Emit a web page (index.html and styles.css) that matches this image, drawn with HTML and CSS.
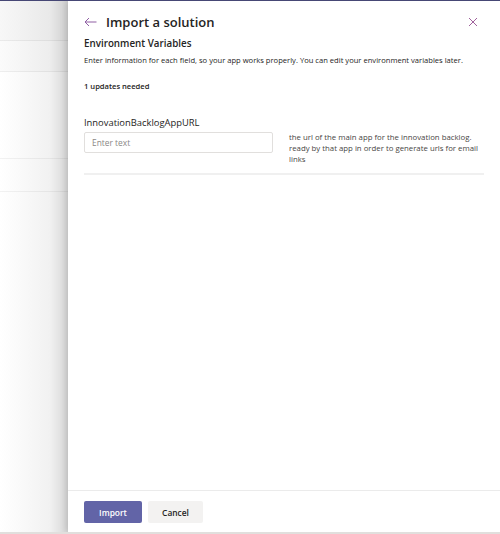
FILE: index.html
```html
<!DOCTYPE html>
<html>
<head>
<meta charset="utf-8">
<link rel="stylesheet" href="styles.css">
</head>
<body>
<div class="screen">
  <div class="backdrop">
    <div class="bd-row bd-top"></div>
    <div class="bd-row bd-band"></div>
    <div class="bd-row bd-gap"></div>
    <div class="bd-row bd-item"></div>
    <div class="bd-rest"></div>
  </div>
  <div class="panel">
    <div class="panel-body">
      <div class="header">
        <div class="title-wrap">
          <svg class="back" width="13" height="10" viewBox="0 0 13 10"><path d="M12.5 5H1M5 1L1 5l4 4" fill="none" stroke="currentColor" stroke-width="1"/></svg>
          <h1 class="title">Import a solution</h1>
        </div>
        <svg class="close" width="10" height="10" viewBox="0 0 10 10"><path d="M1 1l8 8M9 1L1 9" fill="none" stroke="currentColor" stroke-width="1"/></svg>
      </div>
      <h2 class="section-title">Environment Variables</h2>
      <p class="section-desc">Enter information for each field, so your app works properly. You can edit your environment variables later.</p>
      <p class="updates">1 updates needed</p>
      <div class="var-row">
        <div class="field">
          <label class="field-label">InnovationBacklogAppURL</label>
          <div class="input">Enter text</div>
        </div>
        <p class="var-desc">the url of the main app for the innovation backlog. ready by that app in order to generate urls for email links</p>
      </div>
    </div>
    <div class="footer">
      <button class="btn primary">Import</button>
      <button class="btn secondary">Cancel</button>
    </div>
  </div>
</div>
</body>
</html>
```
FILE: styles.css
```css
html, body {
  margin: 0;
  padding: 0;
  background: #fff;
}
body {
  font-family: "Open Sans", "Noto Sans", sans-serif;
  color: #252423;
}
.screen {
  width: 500px;
  height: 534px;
  box-sizing: border-box;
  border-top: 1px solid #464775;
  border-bottom: 2px solid #e1dfdd;
  display: flex;
  overflow: hidden;
}
.backdrop {
  width: 68px;
  display: flex;
  flex-direction: column;
  background: linear-gradient(to right, #ffffff 0, #fafafa 20px, #f1f1f1 50px, #d6d6d6 68px);
}
.bd-row { border-bottom: 1px solid rgba(0,0,0,0.05); }
.bd-top { height: 39px; background: rgba(0,0,0,0.03); }
.bd-band { height: 30px; background: rgba(0,0,0,0.015); }
.bd-gap { height: 86px; }
.bd-item { height: 32px; }
.bd-rest { flex: 1; }
.panel {
  flex: 1;
  background: #fff;
  display: flex;
  flex-direction: column;
  box-shadow: -2px 0 6px rgba(0,0,0,0.12);
}
.panel-body {
  flex: 1;
  padding: 0 16px;
}
.header {
  height: 36px;
  display: flex;
  align-items: center;
  justify-content: space-between;
  padding-top: 6px;
  box-sizing: border-box;
}
.title-wrap {
  display: flex;
  align-items: center;
  gap: 9px;
}
.back { color: #8f5fa3; }
.close { color: #a0629c; margin-right: 6px; }
.title {
  margin: 0;
  font-size: 13px;
  font-weight: 600;
  line-height: 18px;
  color: #252423;
}
.section-title {
  margin: 0;
  font-size: 9.8px;
  font-weight: 600;
  line-height: 14px;
}
.section-desc {
  margin: 3px 0 0;
  font-size: 7.6px;
  line-height: 12px;
  color: #252423;
}
.updates {
  margin: 14px 0 0;
  font-size: 7.6px;
  font-weight: 600;
  line-height: 12px;
}
.var-row {
  margin-top: 25px;
  display: flex;
  gap: 16px;
  border-bottom: 2px solid #f0f0f0;
  padding-bottom: 8px;
}
.field { width: 189px; }
.field-label {
  display: block;
  font-size: 9.4px;
  line-height: 12px;
  margin-bottom: 3px;
}
.input {
  height: 21px;
  box-sizing: border-box;
  border: 1px solid #e1dfdd;
  border-radius: 2px;
  font-size: 8.4px;
  line-height: 19px;
  padding: 0 7px;
  color: #8a8886;
}
.var-desc {
  margin: 15px 0 0;
  flex: 1;
  font-size: 7.8px;
  line-height: 11px;
  color: #484644;
}
.footer {
  height: 42px;
  box-sizing: border-box;
  border-top: 1px solid #ebebeb;
  padding: 10px 16px 0;
  display: flex;
  gap: 6px;
}
.btn {
  height: 22px;
  border: none;
  border-radius: 2px;
  font-family: inherit;
  font-size: 8.4px;
  font-weight: 600;
  padding: 0;
}
.primary { width: 58px; background: #6264a7; color: #fff; }
.secondary { width: 55px; background: #f3f2f1; color: #252423; }
```
